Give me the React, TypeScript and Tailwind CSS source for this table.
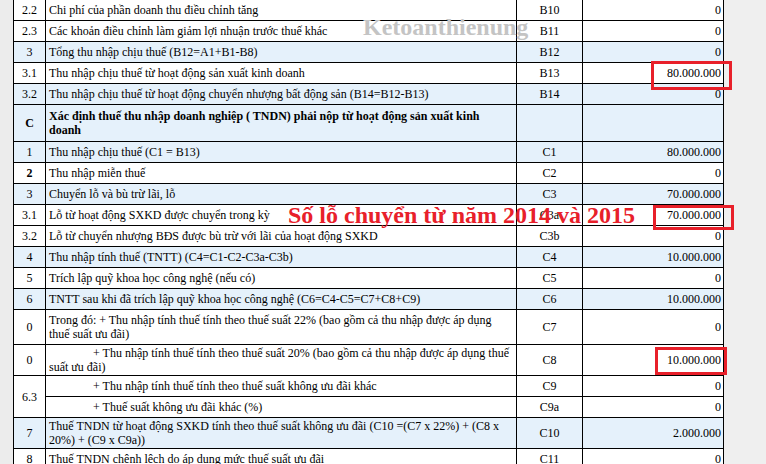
type Row = {
  no?: string;
  desc: React.ReactNode;
  code: string;
  value: string;
  blue?: boolean;
  bold?: boolean;
  h: string;
  indent?: boolean;
  noSpan?: number;
  hideNo?: boolean;
};

const rows: Row[] = [
  { no: '2.2', desc: 'Chi phí của phần doanh thu điều chỉnh tăng', code: 'B10', value: '0', h: 'h-[21px]' },
  { no: '2.3', desc: 'Các khoản điều chỉnh làm giảm lợi nhuận trước thuế khác', code: 'B11', value: '0', h: 'h-[21px]' },
  { no: '3', desc: 'Tổng thu nhập chịu thuế (B12=A1+B1-B8)', code: 'B12', value: '0', blue: true, h: 'h-[21px]' },
  { no: '3.1', desc: 'Thu nhập chịu thuế từ hoạt động sản xuất kinh doanh', code: 'B13', value: '80.000.000', h: 'h-[21px]' },
  { no: '3.2', desc: 'Thu nhập chịu thuế từ hoạt động chuyển nhượng bất động sản (B14=B12-B13)', code: 'B14', value: '0', blue: true, h: 'h-[21px]' },
  {
    no: 'C',
    desc: (
      <>
        <span className="block whitespace-nowrap">Xác định thuế thu nhập doanh nghiệp ( TNDN) phải nộp từ hoạt động sản xuất kinh</span>
        <span className="block">doanh</span>
      </>
    ),
    code: '',
    value: '',
    blue: true,
    bold: true,
    h: 'h-[37px]',
  },
  { no: '1', desc: 'Thu nhập chịu thuế (C1 = B13)', code: 'C1', value: '80.000.000', blue: true, h: 'h-[21px]' },
  { no: '2', desc: 'Thu nhập miễn thuế', code: 'C2', value: '0', h: 'h-[21px]' },
  { no: '3', desc: 'Chuyển lỗ và bù trừ lãi, lỗ', code: 'C3', value: '70.000.000', blue: true, h: 'h-[21px]' },
  { no: '3.1', desc: 'Lỗ từ hoạt động SXKD được chuyển trong kỳ', code: 'C3a', value: '70.000.000', h: 'h-[21px]' },
  { no: '3.2', desc: 'Lỗ từ chuyển nhượng BĐS được bù trừ với lãi của hoạt động SXKD', code: 'C3b', value: '0', h: 'h-[21px]' },
  { no: '4', desc: 'Thu nhập tính thuế (TNTT) (C4=C1-C2-C3a-C3b)', code: 'C4', value: '10.000.000', blue: true, h: 'h-[21px]' },
  { no: '5', desc: 'Trích lập quỹ khoa học công nghệ (nếu có)', code: 'C5', value: '0', h: 'h-[21px]' },
  { no: '6', desc: 'TNTT sau khi đã trích lập quỹ khoa học công nghệ (C6=C4-C5=C7+C8+C9)', code: 'C6', value: '10.000.000', blue: true, h: 'h-[21px]' },
  {
    no: '0',
    desc: (
      <>
        <span className="block whitespace-nowrap">Trong đó: + Thu nhập tính thuế tính theo thuế suất 22% (bao gồm cả thu nhập được áp dụng</span>
        <span className="block">thuế suất ưu đãi)</span>
      </>
    ),
    code: 'C7',
    value: '0',
    h: 'h-[35px]',
  },
  {
    no: '0',
    desc: (
      <>
        <span className="block whitespace-nowrap pl-[44px]">+ Thu nhập tính thuế tính theo thuế suất 20% (bao gồm cả thu nhập được áp dụng thuế</span>
        <span className="block">suất ưu đãi)</span>
      </>
    ),
    code: 'C8',
    value: '10.000.000',
    h: 'h-[31px]',
  },
  { no: '6.3', noSpan: 2, desc: '+ Thu nhập tính thuế tính theo thuế suất không ưu đãi khác', indent: true, code: 'C9', value: '0', h: 'h-[21px]' },
  { hideNo: true, desc: '+ Thuế suất không ưu đãi khác (%)', indent: true, code: 'C9a', value: '0', h: 'h-[21px]' },
  {
    no: '7',
    desc: (
      <>
        <span className="block whitespace-nowrap">Thuế TNDN từ hoạt động SXKD tính theo thuế suất không ưu đãi (C10 =(C7 x 22%) + (C8 x</span>
        <span className="block">20%) + (C9 x C9a))</span>
      </>
    ),
    code: 'C10',
    value: '2.000.000',
    blue: true,
    h: 'h-[31px]',
  },
  { no: '8', desc: 'Thuế TNDN chênh lệch do áp dụng mức thuế suất ưu đãi', code: 'C11', value: '0', h: 'h-[21px]' },
];

export default function App() {
  return (
    <div className="flex h-[464px] w-[766px] overflow-hidden bg-[#efefef] font-['Liberation_Serif','Times_New_Roman',serif] text-[12px] leading-[14px] text-black">
      <div className="w-[13px] shrink-0 bg-[#ececec]" />
      <div className="relative w-[710px] shrink-0 bg-white">
        <table className="-mt-px w-[710px] table-fixed border-collapse font-['Liberation_Serif','Times_New_Roman',serif] text-[12px] leading-[14px] text-black">
          <colgroup>
            <col className="w-[32px]" />
            <col className="w-[471px]" />
            <col className="w-[66px]" />
            <col className="w-[141px]" />
          </colgroup>
          <tbody>
            {rows.map((r, i) => (
              <tr key={i} className={`${r.h} ${r.blue ? 'bg-[#e5f1fb]' : 'bg-white'}`}>
                {!r.hideNo && (
                  <td
                    rowSpan={r.noSpan}
                    className={`border border-black p-0 text-center align-middle ${r.no === 'C' || r.code === 'C2' ? 'font-bold' : ''}`}
                  >
                    {r.no}
                  </td>
                )}
                <td className={`border border-black py-0 align-middle ${r.bold ? 'font-bold' : ''} ${r.indent ? 'pl-[47px] pr-[3px]' : 'px-[3px]'}`}>
                  <div className="whitespace-nowrap">{r.desc}</div>
                </td>
                <td className="border border-black p-0 text-center align-middle">{r.code}</td>
                <td className="border border-black py-0 pr-[2px] text-right align-middle">{r.value}</td>
              </tr>
            ))}
          </tbody>
        </table>

        {/* watermark */}
        <div className="pointer-events-none absolute left-[350px] top-[15px] text-[24px] font-bold leading-none text-[#c4c4c4]">
          Ketoanthienung
        </div>

        {/* annotation */}
        <div className="pointer-events-none absolute left-[275px] top-[203px] whitespace-nowrap text-[24px] font-bold leading-none text-[#e8202a]">
          Số lỗ chuyển từ năm 2014 và 2015
        </div>

        {/* highlight boxes */}
        <div className="pointer-events-none absolute left-[638px] top-[61px] h-[29px] w-[81px] border-[3px] border-[#e8202a]" />
        <div className="pointer-events-none absolute left-[640px] top-[205px] h-[25px] w-[81px] border-[3px] border-[#e8202a]" />
        <div className="pointer-events-none absolute left-[642px] top-[347px] h-[28px] w-[72px] border-[3px] border-[#e8202a]" />
      </div>
      <div className="flex-1" />
    </div>
  );
}
